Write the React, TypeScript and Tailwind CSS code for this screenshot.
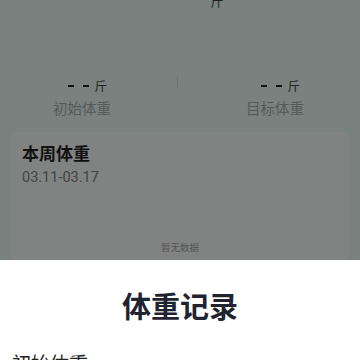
import React from "react";

function Stat({ label, width }: { label: string; width: string }) {
  return (
    <div className={`flex flex-col items-center ${width}`}>
      <div className="flex flex-col items-end">
        <div className="flex items-center h-[14px] mr-[4px]">
          <div className="w-[6px] h-[2.5px] bg-[#111]" />
          <div className="w-[6px] h-[2.5px] bg-[#111] ml-[9px]" />
          <span className="text-[12.5px] text-[#222] leading-[14px] ml-[5px]">斤</span>
        </div>
        <span className="text-[14.5px] text-[#555a59] leading-[20px] mt-[5px]">{label}</span>
      </div>
    </div>
  );
}

export default function App() {
  return (
    <div
      className="relative w-[360px] h-[360px] overflow-hidden bg-[#7a8280]"
      style={{ fontFamily: '"Noto Sans CJK SC", "Noto Sans", sans-serif' }}
    >
      <div className="flex flex-col">
        <div className="h-[8px] flex justify-center">
          <span className="text-[13px] leading-none text-[#222] -mt-[6px] ml-[74px]">斤</span>
        </div>
        <div className="mt-[71px] flex items-start">
          <Stat label="初始体重" width="w-[164px]" />
          <div className="w-px h-[12px] bg-[#6e7674] ml-[13px] -mt-[3px]" />
          <div className="w-[12px]" />
          <Stat label="目标体重" width="w-[170px]" />
        </div>
        <div className="mx-[10px] mt-[14px] h-[200px] rounded-[8px] bg-[#818282] flex flex-col px-[12px] pt-[10px]">
          <span className="text-[17px] font-bold text-[#111] leading-[22px]">本周体重</span>
          <span
            className="text-[14.5px] text-[#444] leading-[18px] mt-[5px]"
            style={{ fontFamily: 'Roboto, "Noto Sans CJK SC", sans-serif' }}
          >
            03.11-03.17
          </span>
          <div className="mt-[54px] flex justify-center">
            <span className="text-[9.5px] text-[#555] leading-[12px]">暂无数据</span>
          </div>
        </div>
      </div>
      <div className="absolute left-0 right-0 top-[260px] bottom-0 bg-white flex flex-col items-center">
        <span className="mt-[25px] text-[29px] font-bold text-[#1f2430] leading-[40px]">体重记录</span>
        <div className="w-full flex justify-between px-[12px] mt-[26px]">
          <span className="text-[19px] text-[#222] leading-[24px]">初始体重</span>
          <span className="text-[19px] text-[#aaa] leading-[24px] mr-[120px]">- -</span>
        </div>
      </div>
    </div>
  );
}
